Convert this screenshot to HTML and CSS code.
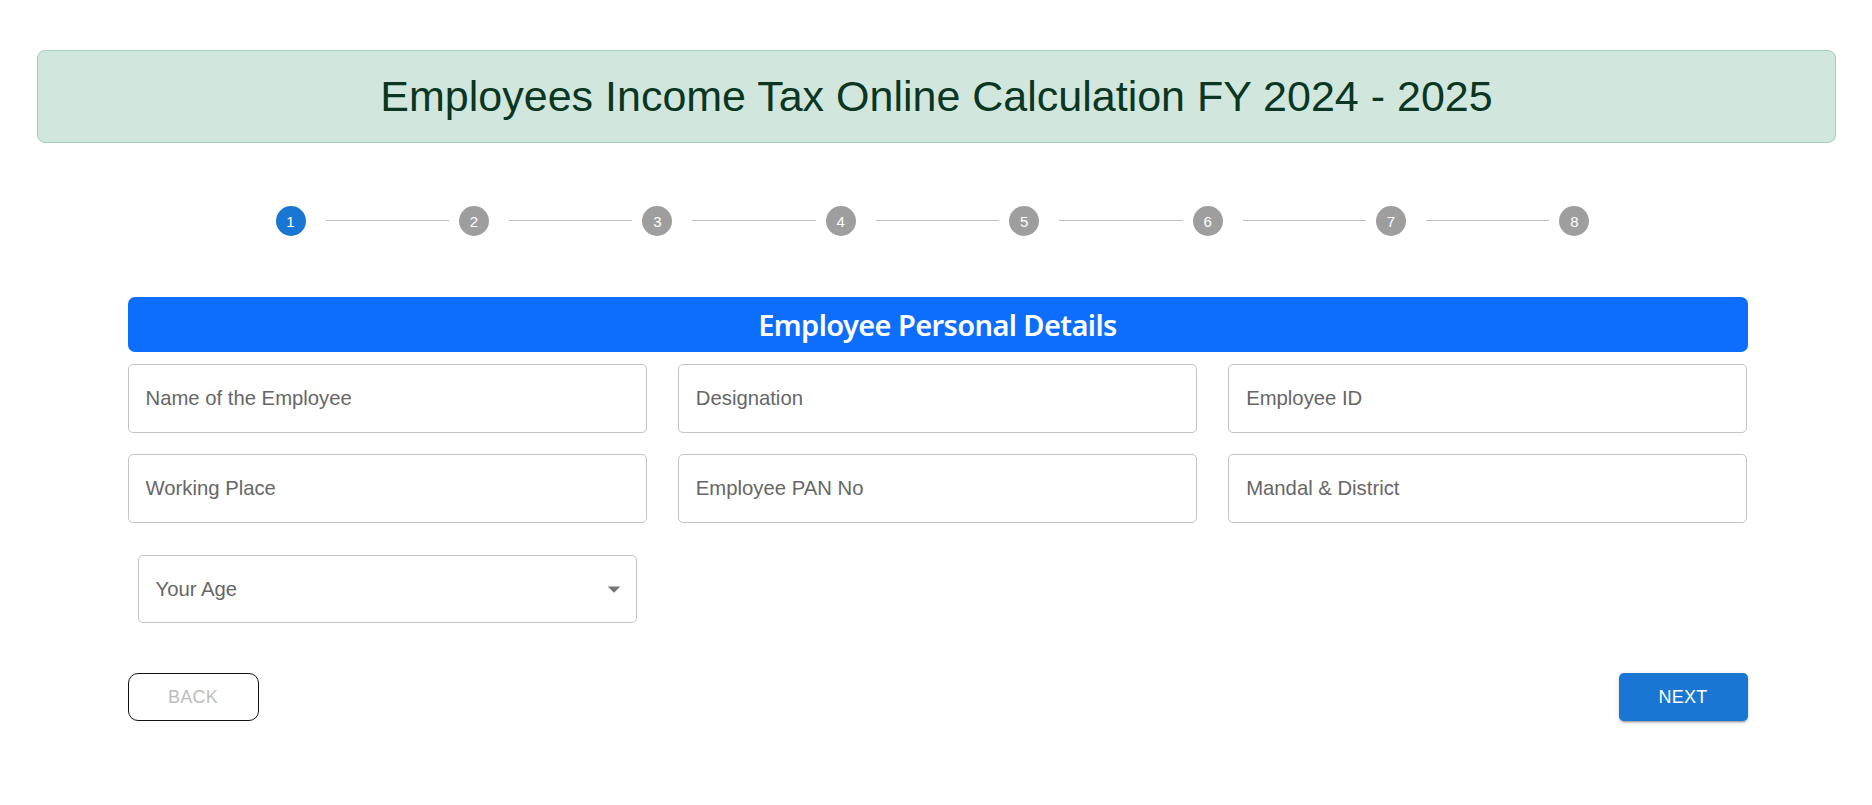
FILE: index.html
```html
<!DOCTYPE html>
<html lang="en">
<head>
<meta charset="utf-8">
<title>Employees Income Tax Online Calculation</title>
<link rel="stylesheet" href="styles.css">
</head>
<body>
<div class="page">
  <div class="title-box">
    <h1 class="title">Employees Income Tax Online Calculation FY 2024 - 2025</h1>
  </div>

  <div class="stepper">
    <div class="step"><span class="step-icon active">1</span></div>
    <div class="connector"></div>
    <div class="step"><span class="step-icon">2</span></div>
    <div class="connector"></div>
    <div class="step"><span class="step-icon">3</span></div>
    <div class="connector"></div>
    <div class="step"><span class="step-icon">4</span></div>
    <div class="connector"></div>
    <div class="step"><span class="step-icon">5</span></div>
    <div class="connector"></div>
    <div class="step"><span class="step-icon">6</span></div>
    <div class="connector"></div>
    <div class="step"><span class="step-icon">7</span></div>
    <div class="connector"></div>
    <div class="step"><span class="step-icon">8</span></div>
  </div>

  <div class="form-area">
    <h4 class="section-title">Employee Personal Details</h4>
    <div class="fields">
      <input class="field" type="text" placeholder="Name of the Employee">
      <input class="field" type="text" placeholder="Designation">
      <input class="field" type="text" placeholder="Employee ID">
      <input class="field" type="text" placeholder="Working Place">
      <input class="field" type="text" placeholder="Employee PAN No">
      <input class="field" type="text" placeholder="Mandal &amp; District">
    </div>
    <div class="age-row">
      <div class="select" role="combobox">
        <span class="select-label">Your Age</span>
        <svg class="select-arrow" width="30" height="30" viewBox="0 0 24 24"><path d="M7 10l5 5 5-5z" fill="#757575"/></svg>
      </div>
    </div>
    <div class="actions">
      <button class="btn btn-back" disabled>BACK</button>
      <button class="btn btn-next">NEXT</button>
    </div>
  </div>
</div>
</body>
</html>
```

FILE: styles.css
```css
* {
  box-sizing: border-box;
}

html, body {
  margin: 0;
  padding: 0;
  background: #ffffff;
}

body {
  font-family: "Liberation Sans", Arial, sans-serif;
}

.page {
  padding: 50px 36px 40px 37px;
}

.title-box {
  background: #d1e7dd;
  border: 1px solid #a3cfbb;
  border-radius: 8px;
  height: 93px;
  display: flex;
  align-items: center;
  justify-content: center;
}

.title {
  margin: 0;
  font-family: "Liberation Sans", Arial, sans-serif;
  font-weight: 400;
  font-size: 43px;
  line-height: 1.2;
  color: #0a3622;
  text-align: center;
}

.stepper {
  width: 1344px;
  margin: 63px auto 0;
  display: flex;
  align-items: center;
  position: relative;
  left: 1px;
}

.step {
  padding: 0 20px 0 10px;
  display: flex;
  align-items: center;
}

.step-icon {
  width: 30px;
  height: 30px;
  border-radius: 50%;
  background: #9e9e9e;
  color: #ffffff;
  font-size: 15px;
  display: flex;
  align-items: center;
  justify-content: center;
}

.step-icon.active {
  background: #1976d2;
}

.connector {
  flex: 1;
  border-top: 1px solid #bdbdbd;
  height: 0;
  margin-top: -2px;
}

.form-area {
  width: 1620px;
  margin: 61px auto 0;
  position: relative;
  left: 1px;
}

.section-title {
  margin: 0;
  height: 55px;
  background: #0d6efd;
  border-radius: 7px;
  color: #ffffff;
  font-family: "Noto Sans", "Open Sans", sans-serif;
  font-weight: 600;
  font-size: 29px;
  letter-spacing: -0.6px;
  display: flex;
  align-items: center;
  justify-content: center;
}

.fields {
  margin-top: 12px;
  display: grid;
  grid-template-columns: repeat(3, 1fr);
  column-gap: 31px;
  row-gap: 21px;
}

.field {
  height: 69px;
  border: 1px solid #c4c4c4;
  border-radius: 5px;
  padding: 0 17px;
  font-family: "Liberation Sans", Arial, sans-serif;
  font-size: 20.3px;
  color: #222;
  background: #fff;
  outline: none;
  width: 100%;
}

.field::placeholder {
  color: #666666;
  opacity: 1;
}

.age-row {
  margin-top: 32px;
  padding-left: 10px;
}

.select {
  width: 499px;
  height: 68px;
  border: 1px solid #c4c4c4;
  border-radius: 5px;
  padding: 0 7px 0 17px;
  display: flex;
  align-items: center;
  justify-content: space-between;
}

.select-label {
  font-size: 20.3px;
  color: #666666;
}

.select-arrow {
  display: block;
}

.actions {
  margin-top: 50px;
  display: flex;
  justify-content: space-between;
}

.btn {
  height: 48px;
  font-family: "Liberation Sans", Arial, sans-serif;
  font-size: 18px;
  letter-spacing: 0.3px;
  text-transform: uppercase;
  cursor: pointer;
}

.btn-back {
  width: 131px;
  background: #ffffff;
  border: 1px solid #111111;
  border-radius: 10px;
  color: #bdbdbd;
}

.btn-next {
  width: 129px;
  background: #1976d2;
  border: none;
  border-radius: 5px;
  color: #ffffff;
  box-shadow: 0 3px 1px -2px rgba(0,0,0,0.2), 0 2px 2px 0 rgba(0,0,0,0.14), 0 1px 5px 0 rgba(0,0,0,0.12);
}
```
